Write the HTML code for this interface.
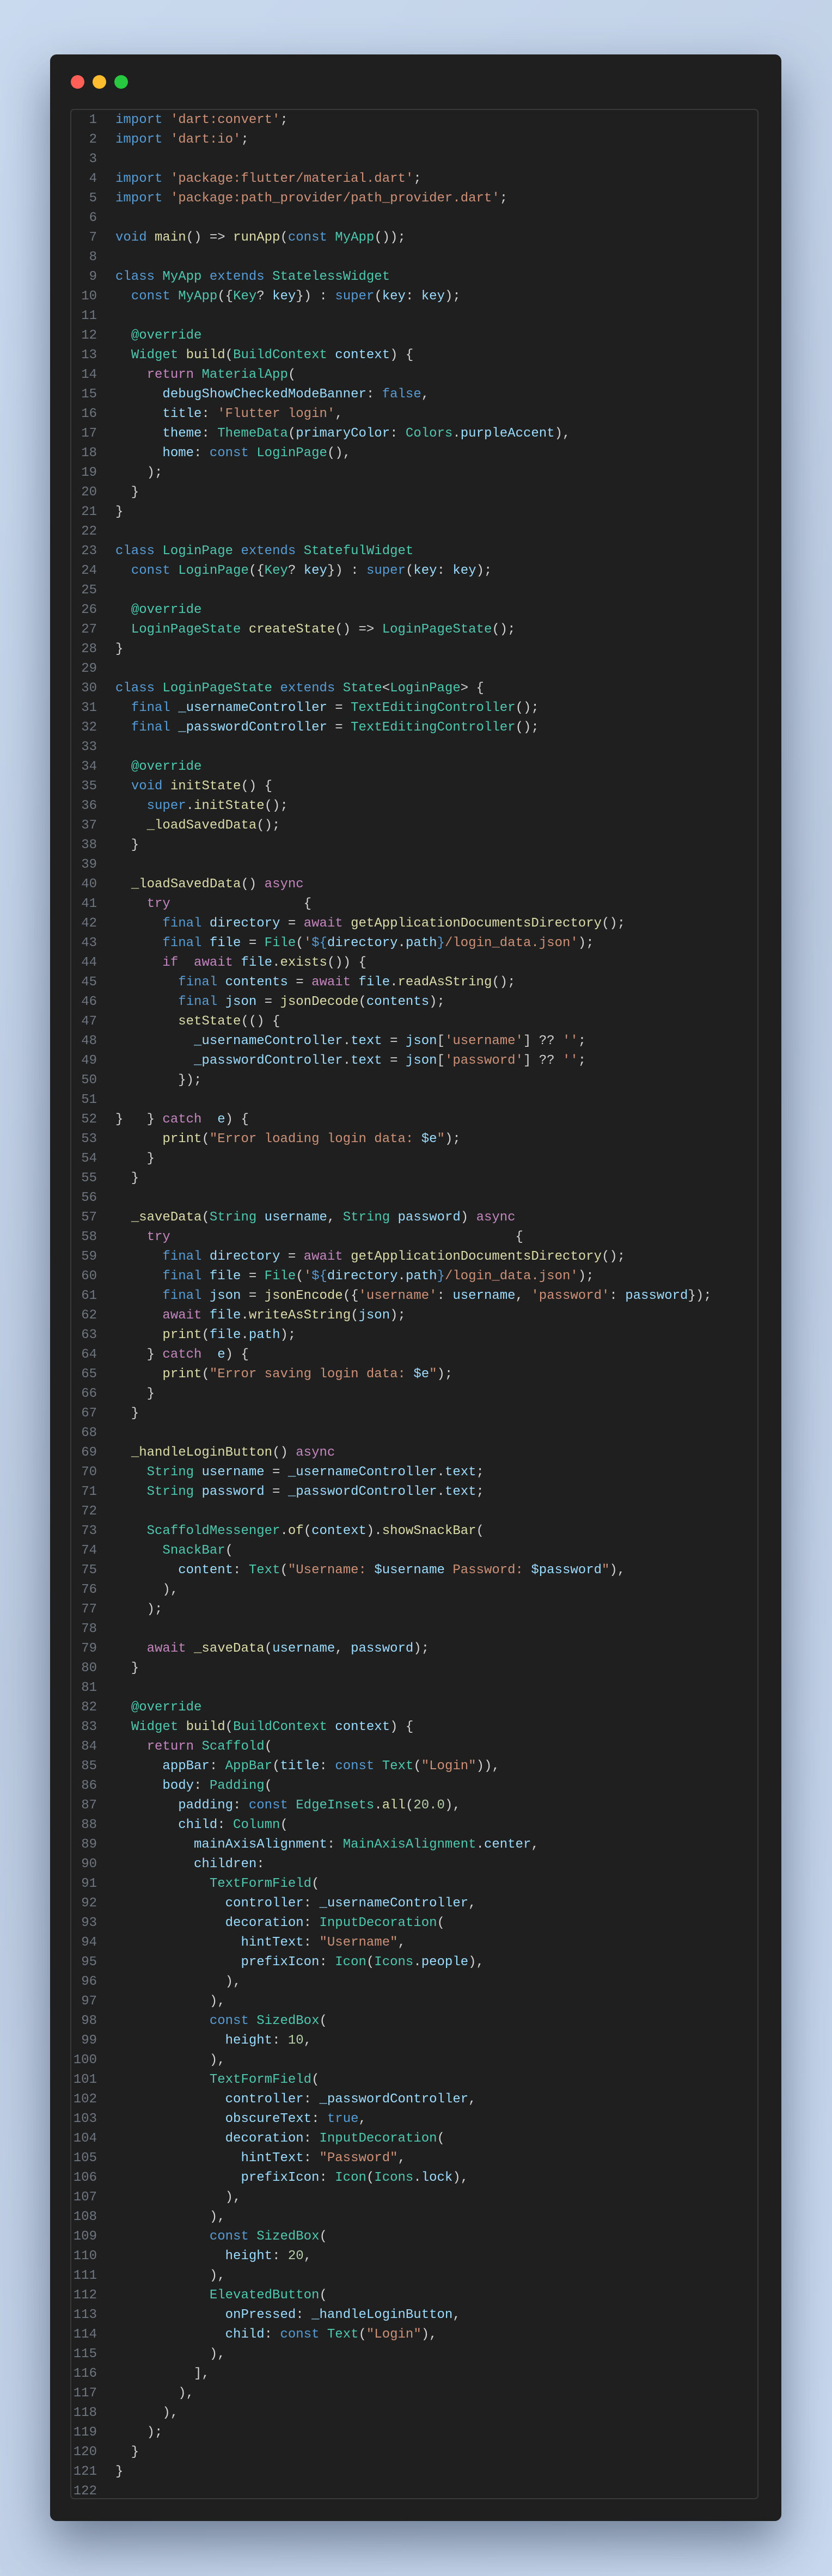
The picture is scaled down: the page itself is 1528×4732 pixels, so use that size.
<!DOCTYPE html>
<html><head><meta charset="utf-8"><style>
html,body{margin:0;padding:0}
body{width:1528px;height:4732px;background:linear-gradient(135deg,#c9d9ee,#bccbe0 50%,#c8d8ee);position:relative;overflow:hidden;font-family:"Liberation Mono","DejaVu Sans Mono",monospace}
.win{position:absolute;left:92px;top:100px;width:1343px;height:4531px;background:#1f1f1f;border-radius:12px;box-shadow:0 40px 90px rgba(40,55,80,.55)}
.dot{position:absolute;top:38px;width:25px;height:25px;border-radius:50%}
.box{position:absolute;left:37px;top:100px;width:1264px;height:4391px;border:2px solid #393939;border-radius:7px;box-sizing:border-box}
.code{position:absolute;left:0;top:0;padding-top:1px}
.l{height:36px;line-height:36px;white-space:pre;font-size:24px;color:#d4d4d4}
.n{display:inline-block;width:47px;text-align:right;color:#6e7681;margin-right:34px}
.k{color:#569cd6}.c{color:#c586c0}.s{color:#ce9178}.f{color:#dcdcaa}.t{color:#4ec9b0}.v{color:#9cdcfe}.m{color:#b5cea8}
</style></head><body>
<div class="win">
<div class="dot" style="left:38px;background:#fe5f57"></div>
<div class="dot" style="left:78px;background:#febc2e"></div>
<div class="dot" style="left:118px;background:#28c840"></div>
<div class="box"><div class="code">
<div class="l"><span class="n">1</span><span class="k">import</span> <span class="s">'dart:convert'</span>;</div>
<div class="l"><span class="n">2</span><span class="k">import</span> <span class="s">'dart:io'</span>;</div>
<div class="l"><span class="n">3</span></div>
<div class="l"><span class="n">4</span><span class="k">import</span> <span class="s">'package:flutter/material.dart'</span>;</div>
<div class="l"><span class="n">5</span><span class="k">import</span> <span class="s">'package:path_provider/path_provider.dart'</span>;</div>
<div class="l"><span class="n">6</span></div>
<div class="l"><span class="n">7</span><span class="k">void</span> <span class="f">main</span>() =&gt; <span class="f">runApp</span>(<span class="k">const</span> <span class="t">MyApp</span>());</div>
<div class="l"><span class="n">8</span></div>
<div class="l"><span class="n">9</span><span class="k">class</span> <span class="t">MyApp</span> <span class="k">extends</span> <span class="t">StatelessWidget</span></div>
<div class="l"><span class="n">10</span>  <span class="k">const</span> <span class="t">MyApp</span>({<span class="t">Key</span>? <span class="v">key</span>}) : <span class="k">super</span>(<span class="v">key</span>: <span class="v">key</span>);</div>
<div class="l"><span class="n">11</span></div>
<div class="l"><span class="n">12</span>  <span class="t">@override</span></div>
<div class="l"><span class="n">13</span>  <span class="t">Widget</span> <span class="f">build</span>(<span class="t">BuildContext</span> <span class="v">context</span>) {</div>
<div class="l"><span class="n">14</span>    <span class="c">return</span> <span class="t">MaterialApp</span>(</div>
<div class="l"><span class="n">15</span>      <span class="v">debugShowCheckedModeBanner</span>: <span class="k">false</span>,</div>
<div class="l"><span class="n">16</span>      <span class="v">title</span>: <span class="s">'Flutter login'</span>,</div>
<div class="l"><span class="n">17</span>      <span class="v">theme</span>: <span class="t">ThemeData</span>(<span class="v">primaryColor</span>: <span class="t">Colors</span>.<span class="v">purpleAccent</span>),</div>
<div class="l"><span class="n">18</span>      <span class="v">home</span>: <span class="k">const</span> <span class="t">LoginPage</span>(),</div>
<div class="l"><span class="n">19</span>    );</div>
<div class="l"><span class="n">20</span>  }</div>
<div class="l"><span class="n">21</span>}</div>
<div class="l"><span class="n">22</span></div>
<div class="l"><span class="n">23</span><span class="k">class</span> <span class="t">LoginPage</span> <span class="k">extends</span> <span class="t">StatefulWidget</span></div>
<div class="l"><span class="n">24</span>  <span class="k">const</span> <span class="t">LoginPage</span>({<span class="t">Key</span>? <span class="v">key</span>}) : <span class="k">super</span>(<span class="v">key</span>: <span class="v">key</span>);</div>
<div class="l"><span class="n">25</span></div>
<div class="l"><span class="n">26</span>  <span class="t">@override</span></div>
<div class="l"><span class="n">27</span>  <span class="t">LoginPageState</span> <span class="f">createState</span>() =&gt; <span class="t">LoginPageState</span>();</div>
<div class="l"><span class="n">28</span>}</div>
<div class="l"><span class="n">29</span></div>
<div class="l"><span class="n">30</span><span class="k">class</span> <span class="t">LoginPageState</span> <span class="k">extends</span> <span class="t">State</span>&lt;<span class="t">LoginPage</span>&gt; {</div>
<div class="l"><span class="n">31</span>  <span class="k">final</span> <span class="v">_usernameController</span> = <span class="t">TextEditingController</span>();</div>
<div class="l"><span class="n">32</span>  <span class="k">final</span> <span class="v">_passwordController</span> = <span class="t">TextEditingController</span>();</div>
<div class="l"><span class="n">33</span></div>
<div class="l"><span class="n">34</span>  <span class="t">@override</span></div>
<div class="l"><span class="n">35</span>  <span class="k">void</span> <span class="f">initState</span>() {</div>
<div class="l"><span class="n">36</span>    <span class="k">super</span>.<span class="f">initState</span>();</div>
<div class="l"><span class="n">37</span>    <span class="f">_loadSavedData</span>();</div>
<div class="l"><span class="n">38</span>  }</div>
<div class="l"><span class="n">39</span></div>
<div class="l"><span class="n">40</span>  <span class="f">_loadSavedData</span>() <span class="c">async</span></div>
<div class="l"><span class="n">41</span>    <span class="c">try</span>                 {</div>
<div class="l"><span class="n">42</span>      <span class="k">final</span> <span class="v">directory</span> = <span class="c">await</span> <span class="f">getApplicationDocumentsDirectory</span>();</div>
<div class="l"><span class="n">43</span>      <span class="k">final</span> <span class="v">file</span> = <span class="t">File</span>(<span class="s">'</span><span class="k">${</span><span class="v">directory</span>.<span class="v">path</span><span class="k">}</span><span class="s">/login_data.json'</span>);</div>
<div class="l"><span class="n">44</span>      <span class="c">if</span>  <span class="c">await</span> <span class="v">file</span>.<span class="f">exists</span>()) {</div>
<div class="l"><span class="n">45</span>        <span class="k">final</span> <span class="v">contents</span> = <span class="c">await</span> <span class="v">file</span>.<span class="f">readAsString</span>();</div>
<div class="l"><span class="n">46</span>        <span class="k">final</span> <span class="v">json</span> = <span class="f">jsonDecode</span>(<span class="v">contents</span>);</div>
<div class="l"><span class="n">47</span>        <span class="f">setState</span>(() {</div>
<div class="l"><span class="n">48</span>          <span class="v">_usernameController</span>.<span class="v">text</span> = <span class="v">json</span>[<span class="s">'username'</span>] ?? <span class="s">''</span>;</div>
<div class="l"><span class="n">49</span>          <span class="v">_passwordController</span>.<span class="v">text</span> = <span class="v">json</span>[<span class="s">'password'</span>] ?? <span class="s">''</span>;</div>
<div class="l"><span class="n">50</span>        });</div>
<div class="l"><span class="n">51</span></div>
<div class="l"><span class="n">52</span>}   } <span class="c">catch</span>  <span class="v">e</span>) {</div>
<div class="l"><span class="n">53</span>      <span class="f">print</span>(<span class="s">"Error loading login data: </span><span class="v">$e</span><span class="s">"</span>);</div>
<div class="l"><span class="n">54</span>    }</div>
<div class="l"><span class="n">55</span>  }</div>
<div class="l"><span class="n">56</span></div>
<div class="l"><span class="n">57</span>  <span class="f">_saveData</span>(<span class="t">String</span> <span class="v">username</span>, <span class="t">String</span> <span class="v">password</span>) <span class="c">async</span></div>
<div class="l"><span class="n">58</span>    <span class="c">try</span>                                            {</div>
<div class="l"><span class="n">59</span>      <span class="k">final</span> <span class="v">directory</span> = <span class="c">await</span> <span class="f">getApplicationDocumentsDirectory</span>();</div>
<div class="l"><span class="n">60</span>      <span class="k">final</span> <span class="v">file</span> = <span class="t">File</span>(<span class="s">'</span><span class="k">${</span><span class="v">directory</span>.<span class="v">path</span><span class="k">}</span><span class="s">/login_data.json'</span>);</div>
<div class="l"><span class="n">61</span>      <span class="k">final</span> <span class="v">json</span> = <span class="f">jsonEncode</span>({<span class="s">'username'</span>: <span class="v">username</span>, <span class="s">'password'</span>: <span class="v">password</span>});</div>
<div class="l"><span class="n">62</span>      <span class="c">await</span> <span class="v">file</span>.<span class="f">writeAsString</span>(<span class="v">json</span>);</div>
<div class="l"><span class="n">63</span>      <span class="f">print</span>(<span class="v">file</span>.<span class="v">path</span>);</div>
<div class="l"><span class="n">64</span>    } <span class="c">catch</span>  <span class="v">e</span>) {</div>
<div class="l"><span class="n">65</span>      <span class="f">print</span>(<span class="s">"Error saving login data: </span><span class="v">$e</span><span class="s">"</span>);</div>
<div class="l"><span class="n">66</span>    }</div>
<div class="l"><span class="n">67</span>  }</div>
<div class="l"><span class="n">68</span></div>
<div class="l"><span class="n">69</span>  <span class="f">_handleLoginButton</span>() <span class="c">async</span></div>
<div class="l"><span class="n">70</span>    <span class="t">String</span> <span class="v">username</span> = <span class="v">_usernameController</span>.<span class="v">text</span>;</div>
<div class="l"><span class="n">71</span>    <span class="t">String</span> <span class="v">password</span> = <span class="v">_passwordController</span>.<span class="v">text</span>;</div>
<div class="l"><span class="n">72</span></div>
<div class="l"><span class="n">73</span>    <span class="t">ScaffoldMessenger</span>.<span class="f">of</span>(<span class="v">context</span>).<span class="f">showSnackBar</span>(</div>
<div class="l"><span class="n">74</span>      <span class="t">SnackBar</span>(</div>
<div class="l"><span class="n">75</span>        <span class="v">content</span>: <span class="t">Text</span>(<span class="s">"Username: </span><span class="v">$username</span><span class="s"> Password: </span><span class="v">$password</span><span class="s">"</span>),</div>
<div class="l"><span class="n">76</span>      ),</div>
<div class="l"><span class="n">77</span>    );</div>
<div class="l"><span class="n">78</span></div>
<div class="l"><span class="n">79</span>    <span class="c">await</span> <span class="f">_saveData</span>(<span class="v">username</span>, <span class="v">password</span>);</div>
<div class="l"><span class="n">80</span>  }</div>
<div class="l"><span class="n">81</span></div>
<div class="l"><span class="n">82</span>  <span class="t">@override</span></div>
<div class="l"><span class="n">83</span>  <span class="t">Widget</span> <span class="f">build</span>(<span class="t">BuildContext</span> <span class="v">context</span>) {</div>
<div class="l"><span class="n">84</span>    <span class="c">return</span> <span class="t">Scaffold</span>(</div>
<div class="l"><span class="n">85</span>      <span class="v">appBar</span>: <span class="t">AppBar</span>(<span class="v">title</span>: <span class="k">const</span> <span class="t">Text</span>(<span class="s">"Login"</span>)),</div>
<div class="l"><span class="n">86</span>      <span class="v">body</span>: <span class="t">Padding</span>(</div>
<div class="l"><span class="n">87</span>        <span class="v">padding</span>: <span class="k">const</span> <span class="t">EdgeInsets</span>.<span class="f">all</span>(<span class="m">20.0</span>),</div>
<div class="l"><span class="n">88</span>        <span class="v">child</span>: <span class="t">Column</span>(</div>
<div class="l"><span class="n">89</span>          <span class="v">mainAxisAlignment</span>: <span class="t">MainAxisAlignment</span>.<span class="v">center</span>,</div>
<div class="l"><span class="n">90</span>          <span class="v">children</span>:</div>
<div class="l"><span class="n">91</span>            <span class="t">TextFormField</span>(</div>
<div class="l"><span class="n">92</span>              <span class="v">controller</span>: <span class="v">_usernameController</span>,</div>
<div class="l"><span class="n">93</span>              <span class="v">decoration</span>: <span class="t">InputDecoration</span>(</div>
<div class="l"><span class="n">94</span>                <span class="v">hintText</span>: <span class="s">"Username"</span>,</div>
<div class="l"><span class="n">95</span>                <span class="v">prefixIcon</span>: <span class="t">Icon</span>(<span class="t">Icons</span>.<span class="v">people</span>),</div>
<div class="l"><span class="n">96</span>              ),</div>
<div class="l"><span class="n">97</span>            ),</div>
<div class="l"><span class="n">98</span>            <span class="k">const</span> <span class="t">SizedBox</span>(</div>
<div class="l"><span class="n">99</span>              <span class="v">height</span>: <span class="m">10</span>,</div>
<div class="l"><span class="n">100</span>            ),</div>
<div class="l"><span class="n">101</span>            <span class="t">TextFormField</span>(</div>
<div class="l"><span class="n">102</span>              <span class="v">controller</span>: <span class="v">_passwordController</span>,</div>
<div class="l"><span class="n">103</span>              <span class="v">obscureText</span>: <span class="k">true</span>,</div>
<div class="l"><span class="n">104</span>              <span class="v">decoration</span>: <span class="t">InputDecoration</span>(</div>
<div class="l"><span class="n">105</span>                <span class="v">hintText</span>: <span class="s">"Password"</span>,</div>
<div class="l"><span class="n">106</span>                <span class="v">prefixIcon</span>: <span class="t">Icon</span>(<span class="t">Icons</span>.<span class="v">lock</span>),</div>
<div class="l"><span class="n">107</span>              ),</div>
<div class="l"><span class="n">108</span>            ),</div>
<div class="l"><span class="n">109</span>            <span class="k">const</span> <span class="t">SizedBox</span>(</div>
<div class="l"><span class="n">110</span>              <span class="v">height</span>: <span class="m">20</span>,</div>
<div class="l"><span class="n">111</span>            ),</div>
<div class="l"><span class="n">112</span>            <span class="t">ElevatedButton</span>(</div>
<div class="l"><span class="n">113</span>              <span class="v">onPressed</span>: <span class="v">_handleLoginButton</span>,</div>
<div class="l"><span class="n">114</span>              <span class="v">child</span>: <span class="k">const</span> <span class="t">Text</span>(<span class="s">"Login"</span>),</div>
<div class="l"><span class="n">115</span>            ),</div>
<div class="l"><span class="n">116</span>          ],</div>
<div class="l"><span class="n">117</span>        ),</div>
<div class="l"><span class="n">118</span>      ),</div>
<div class="l"><span class="n">119</span>    );</div>
<div class="l"><span class="n">120</span>  }</div>
<div class="l"><span class="n">121</span>}</div>
<div class="l"><span class="n">122</span></div>
</div></div>
</div>
</body></html>
